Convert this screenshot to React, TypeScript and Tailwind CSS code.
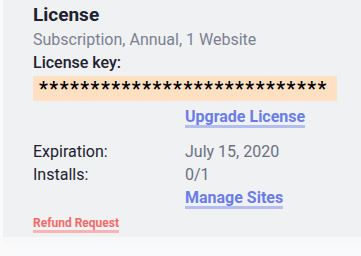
import React from "react"

const App: React.FC = () => {
  return (
    <div className="w-[361px] h-[256px] overflow-hidden bg-[#fafafa] font-['Roboto',sans-serif]">
      <div className="ml-[3px] bg-[#f0f1f3] h-[237px] pl-[30px] pr-[24px] pt-[1px]">
        <div className="text-[19px] font-bold text-[#1c2230] leading-[27px]">License</div>
        <div className="text-[16px] text-[#7b8190] leading-[23px]">Subscription, Annual, 1 Website</div>
        <div className="text-[16px] font-medium text-[#1c2230] leading-[23px]">License key:</div>
        <div className="mt-[2px] bg-[#ffe0c2] h-[25px] flex items-center pl-[6px] text-[20px] font-medium text-black tracking-[1.45px]">
          ****************************
        </div>
        <div className="pl-[152px] mt-[4px]">
          <span className="text-[16px] font-bold text-[#6a7de6] border-b-[3px] border-[#b3bdf0] leading-[17px] inline-block">
            Upgrade License
          </span>
        </div>
        <div className="mt-[11px] grid grid-cols-[152px_1fr] text-[16px] leading-[23px]">
          <div className="text-[#1c2230]">Expiration:</div>
          <div className="text-[#6b7080]">July 15, 2020</div>
          <div className="text-[#1c2230]">Installs:</div>
          <div className="text-[#6b7080]">0/1</div>
          <div />
          <div>
            <span className="text-[16px] font-bold text-[#6a7de6] border-b-[3px] border-[#b3bdf0] leading-[17px] inline-block">
              Manage Sites
            </span>
          </div>
        </div>
        <div className="mt-[1px]">
          <span className="text-[12px] font-bold text-[#f06a6a] border-b-[3px] border-[#f6b5b5] leading-[14px] inline-block">
            Refund Request
          </span>
        </div>
      </div>
      <div className="ml-[3px] h-[7px] bg-[#f7f8f9]" />
    </div>
  )
}

export default App
